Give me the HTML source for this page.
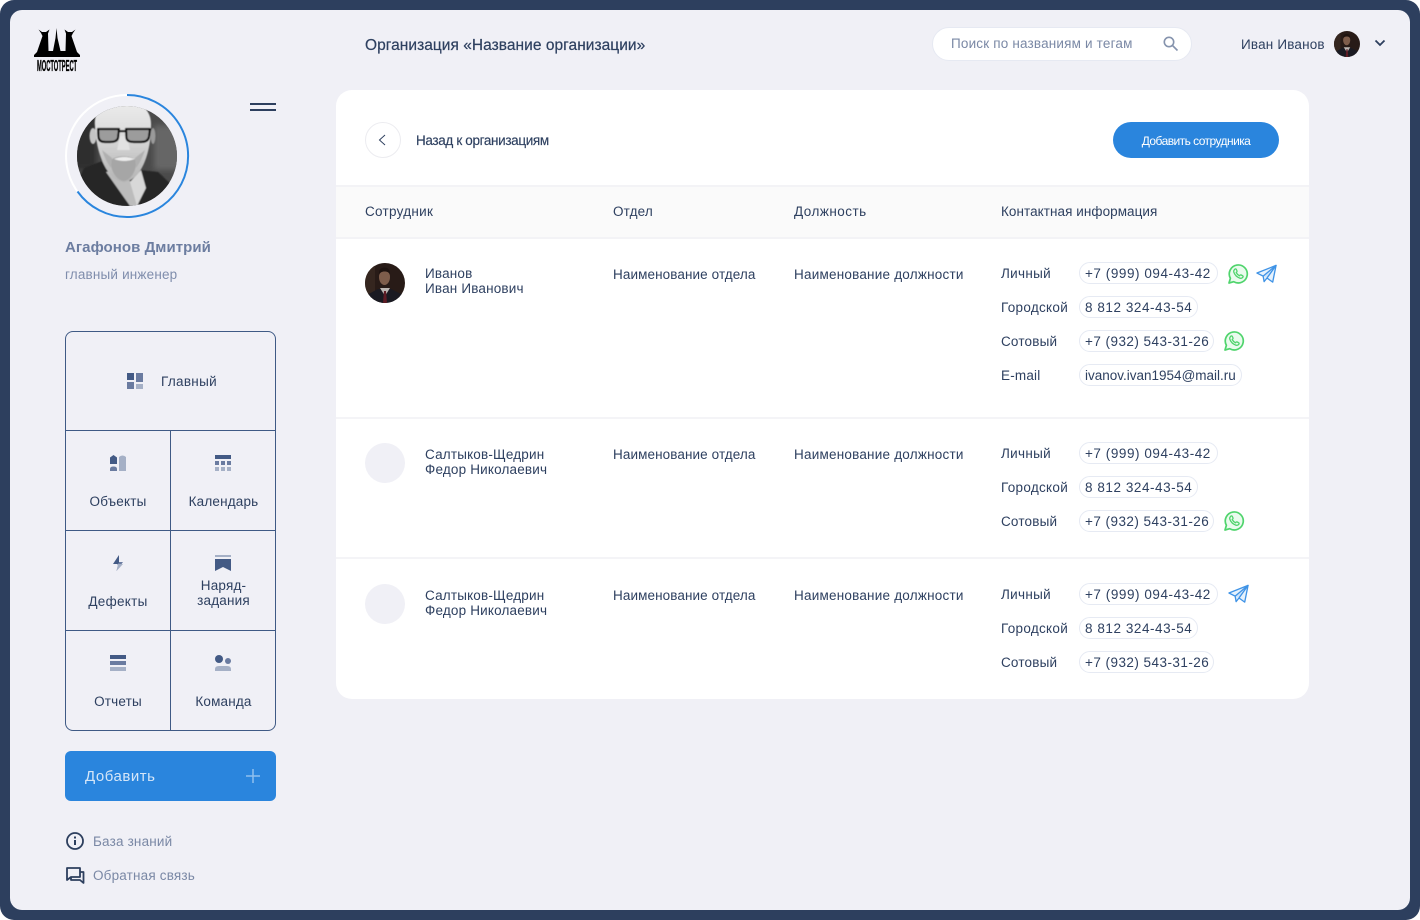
<!DOCTYPE html>
<html lang="ru">
<head>
<meta charset="utf-8">
<title>Организация</title>
<style>
*{box-sizing:border-box;margin:0;padding:0}
html,body{width:1420px;height:920px;overflow:hidden;background:#fff}
body{font-family:"Liberation Sans",sans-serif;color:#2e4060;position:relative}
#frame{position:absolute;inset:0;background:#2d3f5e;border-radius:14px}
#main{position:absolute;left:10px;top:10px;width:1400px;height:900px;background:#f0f0f6;border-radius:12px}
.abs,.t,svg.abs{position:absolute}
.t{white-space:nowrap;font-size:13.500px;line-height:16px;letter-spacing:.18px}
.c{text-align:center}
.s{color:#7a88a5}
.ph{letter-spacing:.55px}
.em{letter-spacing:.0px}
.la{letter-spacing:.3px}
.dep{letter-spacing:.1px}
.pos{letter-spacing:.22px}
#card{position:absolute;left:336px;top:90px;width:973px;height:609px;background:#fff;border-radius:16px}
#head{position:absolute;left:336px;top:185px;width:973px;height:54px;background:#fafafa;border-top:2px solid #f3f3f6;border-bottom:2px solid #f3f3f6}
.sep{position:absolute;left:336px;width:973px;height:2px;background:#f4f4f7}
.pill{position:absolute;height:22px;border:1px solid #e6eaf3;border-radius:11px;background:#fff}
.av{position:absolute;width:40px;height:40px;border-radius:50%;background:#f0f0f6}
#nav{position:absolute;left:65px;top:331px;width:211px;height:400px;border:1px solid #3f5a85;border-radius:8px}
.h{position:absolute;left:65px;width:211px;height:1px;background:#3f5a85}
#add{position:absolute;left:65px;top:751px;width:211px;height:50px;background:#2a85dd;border-radius:6px}
#search{position:absolute;left:932px;top:27px;width:260px;height:34px;background:#fff;border:1px solid #e6e9f2;border-radius:17px}
#addemp{position:absolute;left:1113px;top:122px;width:166px;height:36px;background:#2a85dd;border-radius:18px}
#back{position:absolute;left:365px;top:122px;width:36px;height:36px;border:1px solid #ececf0;border-radius:50%;background:#fff}
</style>
</head>
<body>
<div id="frame"></div>
<div id="main"></div>

<svg class="abs" style="left:0;top:0" width="0" height="0">
<defs>
<clipPath id="cp"><circle cx="127" cy="156" r="50"/></clipPath>
<filter id="soft" x="-5%" y="-5%" width="110%" height="110%"><feGaussianBlur stdDeviation=".6"/></filter>
<filter id="soft2" x="-10%" y="-10%" width="120%" height="120%"><feGaussianBlur stdDeviation="3"/></filter>
<linearGradient id="skin" x1="0" y1="0" x2="0" y2="1"><stop offset="0" stop-color="#ececec"/><stop offset=".4" stop-color="#dcdcdc"/><stop offset=".75" stop-color="#c4c4c4"/><stop offset="1" stop-color="#b4b4b4"/></linearGradient>
<symbol id="man" viewBox="0 0 40 40">
<rect width="40" height="40" fill="#281b17"/>
<rect x="0" y="0" width="10" height="40" fill="#35261f"/>
<path d="M0 40V33L13 26H26L40 33V40Z" fill="#1a1a22"/>
<path d="M15 25L20 33L25 25Z" fill="#bdb7b3"/>
<path d="M19 28H21L22 40H18Z" fill="#5f1c25"/>
<ellipse cx="19.500" cy="14" rx="5.500" ry="8" fill="#7e5d4b"/>
<path d="M14 12C13.500 6 17 4.500 19.500 4.500C23 4.500 25.500 7 25 12C24 9 22 8.500 19.500 8.500C17 8.500 15 9.500 14 12Z" fill="#1e1310"/>
</symbol>
<symbol id="wa" viewBox="0 0 22 22">
<path d="M2 20L3.400 15.300A9 9 0 1 1 6.700 18.700Z" fill="#eafbee" stroke="#4fd46c" stroke-width="1.700" stroke-linejoin="round"/>
<path d="M7.700 6.300C8.400 5.700 9 5.800 9.300 6.400L10 7.900C10.200 8.300 10 8.700 9.700 9L9.200 9.600C9.900 11 10.900 12 12.500 12.800L13.200 12.100C13.500 11.800 13.900 11.800 14.300 12L15.700 12.800C16.200 13.100 16.300 13.700 15.800 14.300C15 15.300 13.900 15.500 12.700 15.100C9.900 14.100 7.900 12.100 6.900 9.400C6.500 8.200 6.800 7.100 7.700 6.300Z" fill="none" stroke="#4fd46c" stroke-width="1.300" stroke-linejoin="round"/>
</symbol>
<symbol id="tg" viewBox="0 0 22 20">
<path d="M1 9L21 1L17.500 18.500L11.500 14.200L8.500 18L7.500 12.200Z" fill="#e6f2fd" stroke="#3f93e6" stroke-width="1.400" stroke-linejoin="round"/>
<path d="M7.500 12.200L21 1L11.500 14.200" fill="#cfe5fb" stroke="#3f93e6" stroke-width="1.400" stroke-linejoin="round"/>
</symbol>
</defs>
</svg>

<!-- logo -->
<svg class="abs" style="left:30px;top:24px" width="54" height="52" viewBox="30 24 54 52">
<path d="M34 55L37 52L42.500 36L41 33L38.500 29.500L42 32L46 32L49.500 29.500L48 33.500L48.500 51L53 51L55.500 38L56.500 28L57.500 38L60.500 51L65.500 51L66 33.500L64.500 29.500L68 32L72 32L75.500 29.500L73 33L71.500 36L77 52L80 55L80 57L34 57Z" fill="#000"/>
<text x="57" y="71" text-anchor="middle" font-family="Liberation Sans" font-weight="700" font-size="16" textLength="40" lengthAdjust="spacingAndGlyphs" fill="#000" stroke="#000" stroke-width=".35">МОСТОТРЕСТ</text>
</svg>

<!-- profile -->
<svg class="abs" style="left:60px;top:88px" width="135" height="135" viewBox="60 88 135 135">
<circle cx="127" cy="156" r="61" fill="none" stroke="#fff" stroke-width="2"/>
<path d="M127 95A61 61 0 1 1 77.500 191.500" fill="none" stroke="#2a85dd" stroke-width="2"/>
<g clip-path="url(#cp)">
<rect x="77" y="106" width="100" height="100" fill="#4a4a4a"/>
<g filter="url(#soft2)">
<rect x="70" y="100" width="26" height="70" fill="#2e2e2e"/>
<rect x="154" y="125" width="30" height="45" fill="#666"/>
</g>
<g filter="url(#soft)">
<path d="M77 206V182L84 168L105 160L118 186L140 170L158 172L177 190V206Z" fill="#252525"/>
<path d="M106 172L114 170L137 186L138 206H130Z" fill="#bcbcbc"/>
<path d="M130 182L141 170L146 188L137 206Z" fill="#d8d8d8"/>
<path d="M95 126C93 110 106 100 123 100C140 100 152 110 151 126C151 152 142 180 124 182C106 180 96 152 95 126Z" fill="url(#skin)"/>
<ellipse cx="93" cy="136" rx="3.500" ry="8" fill="#c4c4c4"/><ellipse cx="153" cy="136" rx="2.500" ry="8" fill="#9a9a9a"/>
<path d="M111 160C116 155 130 155 136 160C137 170 131 180 124 181C116 180 110 170 111 160Z" fill="#a6a6a6"/>
<path d="M102 150Q106 162 111 168L112 158Z" fill="#b0b0b0"/><path d="M145 150Q141 162 136 168L135 158Z" fill="#b0b0b0"/>
<path d="M114 159Q124 155 135 159Q124 163 114 159Z" fill="#ededed"/>
<path d="M120 136L127 136L130 150L117 150Z" fill="#e2e2e2"/>
<path d="M98 129H119L118 138Q117 142 110 142H105Q99 142 98.500 137Z" fill="#9c9c9c" stroke="#0c0c0c" stroke-width="2.200" stroke-linejoin="round"/>
<path d="M126 129H150L149 137Q148 142 141 142H134Q127 142 126.500 138Z" fill="#9c9c9c" stroke="#0c0c0c" stroke-width="2.200" stroke-linejoin="round"/>
<rect x="118" y="130" width="9" height="2.200" fill="#0c0c0c"/>
</g>
</g>
</svg>

<!-- hamburger -->
<div class="abs" style="left:250px;top:103px;width:26px;height:2px;background:#2d3f5e"></div>
<div class="abs" style="left:250px;top:109px;width:26px;height:2px;background:#2d3f5e"></div>

<div class="t" style="left:65px;top:239px;font-size:15px;line-height:18px;font-weight:700;color:#6c7da0;letter-spacing:.05px">Агафонов Дмитрий</div>
<div class="t s" style="left:65px;top:267px;color:#7f8dac">главный инженер</div>

<!-- nav -->
<div id="nav"></div>
<div class="h" style="top:430px"></div>
<div class="h" style="top:530px"></div>
<div class="h" style="top:630px"></div>
<div class="abs" style="left:170px;top:431px;width:1px;height:299px;background:#3f5a85"></div>

<svg class="abs" style="left:0;top:0" width="300" height="740" viewBox="0 0 300 740">
<!-- главный -->
<rect x="127" y="373" width="7" height="7" fill="#435a85"/><rect x="136" y="373" width="7" height="9" fill="#6a7ba0"/>
<rect x="127" y="382" width="7" height="7" fill="#6a7ba0"/><rect x="136" y="384" width="7" height="5" fill="#a5b0c6"/>
<!-- объекты -->
<path d="M110 464V457.500L113.500 455L117 457.500V464Z" fill="#435a85"/>
<path d="M110 471V469Q110 466.500 113.500 466.500Q117 466.500 117 469V471Z" fill="#6a7ba0"/>
<path d="M119 471V457Q122.500 454 126 457V471Z" fill="#a5b0c6"/>
<!-- календарь -->
<rect x="215" y="455" width="16" height="4" fill="#435a85"/>
<g fill="#6a7ba0"><rect x="215" y="461" width="4" height="4"/><rect x="221" y="461" width="4" height="4"/><rect x="227" y="461" width="4" height="4"/></g>
<g fill="#a5b0c6"><rect x="215" y="467" width="4" height="4"/><rect x="221" y="467" width="4" height="4"/><rect x="227" y="467" width="4" height="4"/></g>
<!-- дефекты -->
<path d="M119 555L113 564H118L119 563Z" fill="#435a85"/>
<path d="M119 555V562H123L116.500 571L118 565H117L119 563Z" fill="#6a7ba0"/>
<path d="M118 564H123L116.500 571Z" fill="#a5b0c6"/>
<!-- наряд -->
<rect x="215" y="555" width="16" height="2" fill="#a5b0c6"/>
<path d="M215 559H231V571L223 567L215 571Z" fill="#435a85"/>
<!-- отчеты -->
<rect x="110" y="655" width="16" height="4" fill="#435a85"/><rect x="110" y="661" width="16" height="4" fill="#6a7ba0"/><rect x="110" y="667" width="16" height="4" fill="#a5b0c6"/>
<!-- команда -->
<circle cx="219" cy="659" r="4" fill="#435a85"/><circle cx="228" cy="661" r="3" fill="#6a7ba0"/>
<path d="M215 671V669Q215 666 219 666H227Q231 666 231 669V671Z" fill="#a5b0c6"/>
</svg>

<div class="t" style="left:161px;top:374px;letter-spacing:.3px">Главный</div>
<div class="t c" style="left:66px;top:494px;width:104px">Объекты</div>
<div class="t c" style="left:171px;top:494px;width:105px">Календарь</div>
<div class="t c" style="left:66px;top:594px;width:104px;letter-spacing:.3px">Дефекты</div>
<div class="t c" style="left:171px;top:578px;width:105px;line-height:15px">Наряд-<br>задания</div>
<div class="t c" style="left:66px;top:694px;width:104px">Отчеты</div>
<div class="t c" style="left:171px;top:694px;width:105px">Команда</div>

<div id="add"></div>
<div class="t" style="left:85px;top:768px;font-size:15px;line-height:18px;color:#d5e6f8;letter-spacing:.52px">Добавить</div>
<svg class="abs" style="left:245px;top:768px" width="16" height="16" viewBox="0 0 16 16"><path d="M8 1V15M1 8H15" stroke="#8fc0ef" stroke-width="1.500" fill="none"/></svg>

<svg class="abs" style="left:64px;top:830px" width="24" height="56" viewBox="0 0 24 56" fill="none" stroke="#2d3f5e" stroke-width="1.800">
<circle cx="11" cy="11" r="8"/>
<path d="M11 10V15" stroke-width="2"/><path d="M11 6.500V8.500" stroke-width="2"/>
<path d="M3 38H16V47H7L3 50Z" stroke-linejoin="round"/>
<path d="M16 42H19.500V53L16 50H7V47" stroke-linejoin="round"/>
</svg>
<div class="t s" style="left:93px;top:834px">База знаний</div>
<div class="t s" style="left:93px;top:868px">Обратная связь</div>

<!-- top bar -->
<div class="t" style="left:365px;top:37px;font-size:15.500px;line-height:18px;letter-spacing:.04px;-webkit-text-stroke:.2px #2e4060">Организация «Название организации»</div>
<div id="search"></div>
<div class="t s" style="left:951px;top:36px">Поиск по названиям и тегам</div>
<svg class="abs" style="left:1162px;top:35px" width="17" height="17" viewBox="0 0 17 17" fill="none" stroke="#8593ad" stroke-width="1.600"><circle cx="7" cy="7" r="4.700"/><path d="M10.500 10.500L15.500 15.500"/></svg>
<div class="t" style="left:1241px;top:37px">Иван Иванов</div>
<svg class="abs" style="left:1334px;top:31px;border-radius:50%" width="26" height="26"><use href="#man" width="26" height="26"/></svg>
<svg class="abs" style="left:1374px;top:39px" width="12" height="9" viewBox="0 0 12 9" fill="none" stroke="#2d3f5e" stroke-width="1.800"><path d="M1.500 1.500L6 6L10.500 1.500"/></svg>

<!-- card -->
<div id="card"></div>
<div id="back"></div>
<svg class="abs" style="left:377px;top:133px" width="12" height="14" viewBox="0 0 12 14" fill="none" stroke="#2d3f5e" stroke-width="1"><path d="M8 2L2.500 7L8 12"/></svg>
<div class="t" style="left:416px;top:133px;letter-spacing:-.35px;-webkit-text-stroke:.15px #2e4060">Назад к организациям</div>
<div id="addemp"></div>
<div class="t c" style="left:1113px;top:133px;width:166px;color:#fff;font-size:12px;letter-spacing:-.55px">Добавить сотрудника</div>

<div id="head"></div>
<div class="t" style="left:365px;top:204px;letter-spacing:.29px">Сотрудник</div>
<div class="t" style="left:613px;top:204px">Отдел</div>
<div class="t" style="left:794px;top:204px;letter-spacing:.48px">Должность</div>
<div class="t" style="left:1001px;top:204px;letter-spacing:.06px">Контактная информация</div>
<div class="sep" style="top:417px"></div>
<div class="sep" style="top:557px"></div>

<!-- row 1 -->
<svg class="abs" style="left:365px;top:263px;border-radius:50%" width="40" height="40"><use href="#man" width="40" height="40"/></svg>
<div class="t" style="left:425px;top:266px;line-height:15px">Иванов<br>Иван Иванович</div>
<div class="t dep" style="left:613px;top:267px">Наименование отдела</div>
<div class="t pos" style="left:794px;top:267px">Наименование должности</div>
<div class="t la" style="left:1001px;top:266px">Личный</div>
<div class="pill" style="left:1079px;top:262px;width:139px"></div>
<div class="t ph" style="left:1085px;top:266px">+7 (999) 094-43-42</div>
<svg class="abs" style="left:1227px;top:263px" width="22" height="22"><use href="#wa" width="22" height="22"/></svg>
<svg class="abs" style="left:1256px;top:264px" width="21" height="20"><use href="#tg" width="21" height="20"/></svg>
<div class="t la" style="left:1001px;top:300px">Городской</div>
<div class="pill" style="left:1079px;top:296px;width:119px"></div>
<div class="t ph" style="left:1085px;top:300px">8 812 324-43-54</div>
<div class="t" style="left:1001px;top:334px">Сотовый</div>
<div class="pill" style="left:1079px;top:330px;width:135px"></div>
<div class="t ph" style="left:1085px;top:334px;letter-spacing:.46px">+7 (932) 543-31-26</div>
<svg class="abs" style="left:1223px;top:330px" width="22" height="22"><use href="#wa" width="22" height="22"/></svg>
<div class="t" style="left:1001px;top:368px;letter-spacing:.2px">E-mail</div>
<div class="pill" style="left:1079px;top:364px;width:163px"></div>
<div class="t em" style="left:1085px;top:368px">ivanov.ivan1954@mail.ru</div>

<!-- row 2 -->
<div class="av" style="left:365px;top:443px"></div>
<div class="t" style="left:425px;top:447px;line-height:15px">Салтыков-Щедрин<br>Федор Николаевич</div>
<div class="t dep" style="left:613px;top:447px">Наименование отдела</div>
<div class="t pos" style="left:794px;top:447px">Наименование должности</div>
<div class="t la" style="left:1001px;top:446px">Личный</div>
<div class="pill" style="left:1079px;top:442px;width:139px"></div>
<div class="t ph" style="left:1085px;top:446px">+7 (999) 094-43-42</div>
<div class="t la" style="left:1001px;top:480px">Городской</div>
<div class="pill" style="left:1079px;top:476px;width:119px"></div>
<div class="t ph" style="left:1085px;top:480px">8 812 324-43-54</div>
<div class="t" style="left:1001px;top:514px">Сотовый</div>
<div class="pill" style="left:1079px;top:510px;width:135px"></div>
<div class="t ph" style="left:1085px;top:514px;letter-spacing:.46px">+7 (932) 543-31-26</div>
<svg class="abs" style="left:1223px;top:510px" width="22" height="22"><use href="#wa" width="22" height="22"/></svg>

<!-- row 3 -->
<div class="av" style="left:365px;top:584px"></div>
<div class="t" style="left:425px;top:588px;line-height:15px">Салтыков-Щедрин<br>Федор Николаевич</div>
<div class="t dep" style="left:613px;top:588px">Наименование отдела</div>
<div class="t pos" style="left:794px;top:588px">Наименование должности</div>
<div class="t la" style="left:1001px;top:587px">Личный</div>
<div class="pill" style="left:1079px;top:583px;width:139px"></div>
<div class="t ph" style="left:1085px;top:587px">+7 (999) 094-43-42</div>
<svg class="abs" style="left:1228px;top:584px" width="21" height="20"><use href="#tg" width="21" height="20"/></svg>
<div class="t la" style="left:1001px;top:621px">Городской</div>
<div class="pill" style="left:1079px;top:617px;width:119px"></div>
<div class="t ph" style="left:1085px;top:621px">8 812 324-43-54</div>
<div class="t" style="left:1001px;top:655px">Сотовый</div>
<div class="pill" style="left:1079px;top:651px;width:135px"></div>
<div class="t ph" style="left:1085px;top:655px;letter-spacing:.46px">+7 (932) 543-31-26</div>
</body>
</html>
